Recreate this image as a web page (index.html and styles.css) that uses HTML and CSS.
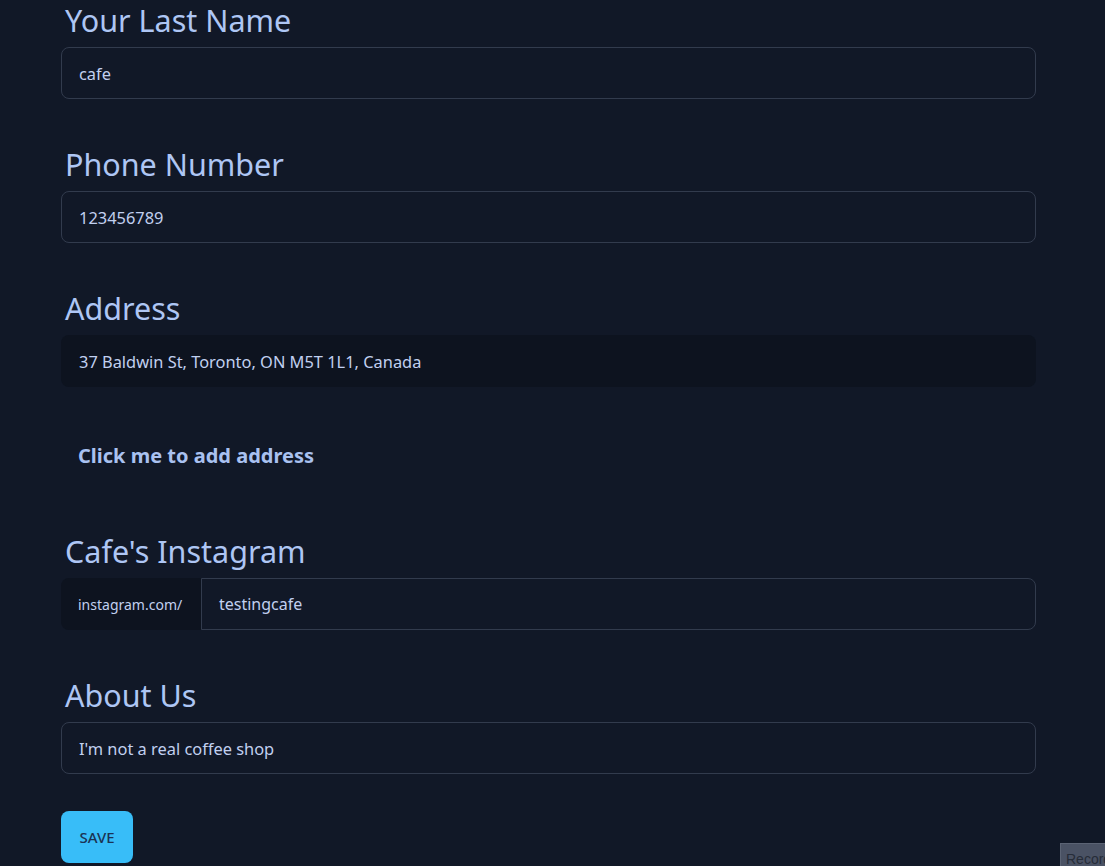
FILE: index.html
```html
<!DOCTYPE html>
<html>
<head>
<meta charset="utf-8">
<link rel="stylesheet" href="styles.css">
</head>
<body>
<form class="form">
  <div class="field">
    <label class="label">Your Last Name</label>
    <div class="input">cafe</div>
  </div>
  <div class="field">
    <label class="label">Phone Number</label>
    <div class="input">123456789</div>
  </div>
  <div class="field">
    <label class="label">Address</label>
    <div class="input input-filled">37 Baldwin St, Toronto, ON M5T 1L1, Canada</div>
    <div class="ghost-row"><span class="ghost">Click me to add address</span></div>
  </div>
  <div class="field">
    <label class="label">Cafe's Instagram</label>
    <div class="group">
      <span class="prefix">instagram.com/</span>
      <div class="input input-group">testingcafe</div>
    </div>
  </div>
  <div class="field">
    <label class="label">About Us</label>
    <div class="input">I'm not a real coffee shop</div>
  </div>
  <div class="actions"><span class="btn">SAVE</span></div>
</form>
<div class="record">Record</div>
</body>
</html>
```
FILE: styles.css
```css
html, body {
  margin: 0;
  padding: 0;
  background: #111827;
  height: 100%;
  overflow: hidden;
}
body {
  font-family: "Noto Sans", "Open Sans", sans-serif;
  color: #b8c8f0;
}
.form {
  width: 975px;
  margin-left: 61px;
  margin-top: 3px;
}
.field {
  display: flex;
  flex-direction: column;
  margin-bottom: 48px;
}
.label {
  box-sizing: border-box;
  font-size: 30.5px;
  line-height: 34px;
  height: 44px;
  padding: 0 0 10px 4px;
  color: #aec6f4;
}
.input {
  box-sizing: border-box;
  height: 52px;
  border: 1px solid #323b4d;
  border-radius: 8px;
  padding: 0 17px;
  display: flex;
  align-items: center;
  font-size: 16.4px;
  color: #c1d0f0;
}
.input-filled {
  border-color: transparent;
  background: #0d131f;
}
.ghost-row {
  display: flex;
  margin-top: 44px;
  margin-bottom: 7px;
}
.ghost {
  height: 48px;
  display: flex;
  align-items: center;
  padding: 0 17px;
  font-size: 20px;
  font-weight: 700;
  color: #a9c1f0;
}
.group {
  display: flex;
  height: 52px;
}
.prefix {
  box-sizing: border-box;
  width: 140px;
  display: flex;
  align-items: center;
  padding-left: 17px;
  background: #0d131f;
  border-radius: 8px 0 0 8px;
  font-size: 14px;
  color: #c1d0f0;
}
.input-group {
  flex: 1;
  border-radius: 0 8px 8px 0;
  font-size: 16px;
}
.actions {
  display: flex;
  margin-top: -11px;
}
.btn {
  width: 72px;
  height: 52px;
  border-radius: 8px;
  background: #38bdf8;
  color: #1b3354;
  font-size: 15px;
  font-weight: 500;
  display: flex;
  align-items: center;
  justify-content: center;
}
.record {
  position: absolute;
  left: 1060px;
  top: 843px;
  width: 60px;
  height: 30px;
  background: #4a5264;
  border: 1px solid #5b6374;
  color: #262c38;
  font-family: "Liberation Sans", sans-serif;
  font-size: 14px;
  padding: 7px 0 0 5px;
  box-sizing: border-box;
}
```
